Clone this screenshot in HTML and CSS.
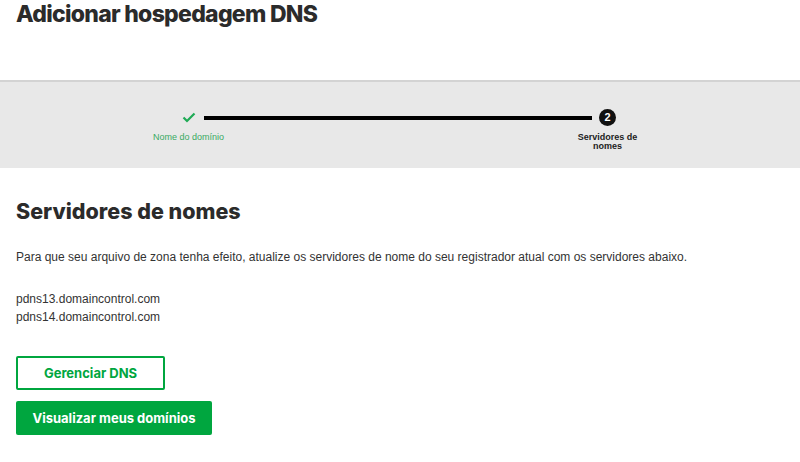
FILE: index.html
```html
<!DOCTYPE html>
<html lang="pt">
<head>
<meta charset="utf-8">
<link rel="stylesheet" href="styles.css">
</head>
<body>
<header class="page-header">
  <h1 class="page-title">Adicionar hospedagem DNS</h1>
</header>
<section class="stepper-band">
  <div class="stepper">
    <div class="step-icon step-done">
      <svg width="14" height="11" viewBox="0 0 14 11"><path d="M1.5 5.5 L5 9 L12.5 1.5" fill="none" stroke="#1faa55" stroke-width="2.2"/></svg>
    </div>
    <div class="step-line"></div>
    <div class="step-icon"><span class="step-num">2</span></div>
    <div class="step-label label-done">Nome do domínio</div>
    <div class="step-gap"></div>
    <div class="step-label label-current">Servidores de nomes</div>
  </div>
</section>
<main class="content">
  <h2 class="section-title">Servidores de nomes</h2>
  <p class="intro">Para que seu arquivo de zona tenha efeito, atualize os servidores de nome do seu registrador atual com os servidores abaixo.</p>
  <ul class="ns-list">
    <li>pdns13.domaincontrol.com</li>
    <li>pdns14.domaincontrol.com</li>
  </ul>
  <div class="actions">
    <button class="btn btn-outline">Gerenciar DNS</button>
    <button class="btn btn-primary">Visualizar meus domínios</button>
  </div>
</main>
</body>
</html>
```
FILE: styles.css
```css
html, body {
  margin: 0;
  padding: 0;
  background: #fff;
}
body {
  font-family: "Liberation Sans", Arial, sans-serif;
  color: #2b2b2b;
  width: 800px;
  overflow: hidden;
}
.page-header {
  height: 80px;
  padding: 0 16px;
  box-sizing: border-box;
}
.page-title {
  margin: 0;
  font-family: Inter, "Open Sans", sans-serif;
  font-weight: 800;
  font-size: 23px;
  line-height: 28px;
  letter-spacing: -0.72px;
  color: #2b2b2b;
}
.stepper-band {
  background: #e8e8e8;
  border-top: 2px solid #d3d3d3;
  height: 88px;
  box-sizing: border-box;
}
.stepper {
  display: grid;
  grid-template-columns: 80px 1fr 80px;
  grid-template-rows: 17px auto;
  width: 499px;
  margin: 0 auto;
  padding-top: 27px;
  transform: translateX(-2px);
}
.step-icon {
  display: flex;
  justify-content: center;
  align-items: center;
}
.step-line {
  height: 4px;
  background: #000;
  align-self: center;
  margin: 0 -24px 0 -25px;
}
.step-num {
  width: 17px;
  height: 17px;
  border-radius: 50%;
  background: #111;
  color: #fff;
  font-weight: 700;
  font-size: 11px;
  line-height: 17px;
  text-align: center;
}
.step-label {
  font-size: 9px;
  line-height: 9px;
  text-align: center;
  margin-top: 7px;
}
.label-done {
  color: #3aaa62;
  white-space: nowrap;
}
.label-current {
  font-weight: 700;
  color: #222;
  padding: 0 8px;
}
.content {
  padding: 0 16px;
}
.section-title {
  margin: 28px 0 0;
  font-family: Inter, "Open Sans", sans-serif;
  font-weight: 800;
  font-size: 21.5px;
  line-height: 30px;
  color: #2b2b2b;
}
.intro {
  margin: 22px 0 0;
  font-size: 12px;
  line-height: 18px;
  color: #333;
}
.ns-list {
  list-style: none;
  margin: 24px 0 0;
  padding: 0;
  font-size: 12px;
  line-height: 18px;
  color: #333;
}
.actions {
  display: flex;
  flex-direction: column;
  align-items: flex-start;
  gap: 11px;
  margin-top: 30px;
}
.btn {
  font-family: Inter, "Open Sans", sans-serif;
  font-weight: 700;
  font-size: 13px;
  height: 34px;
  border-radius: 2px;
  padding: 0 16px;
  cursor: pointer;
}
.btn-outline {
  background: #fff;
  color: #00a63f;
  border: 2px solid #00a63f;
  width: 149px;
}
.btn-primary {
  background: #00a63f;
  color: #fff;
  border: none;
  width: 196px;
}
```
